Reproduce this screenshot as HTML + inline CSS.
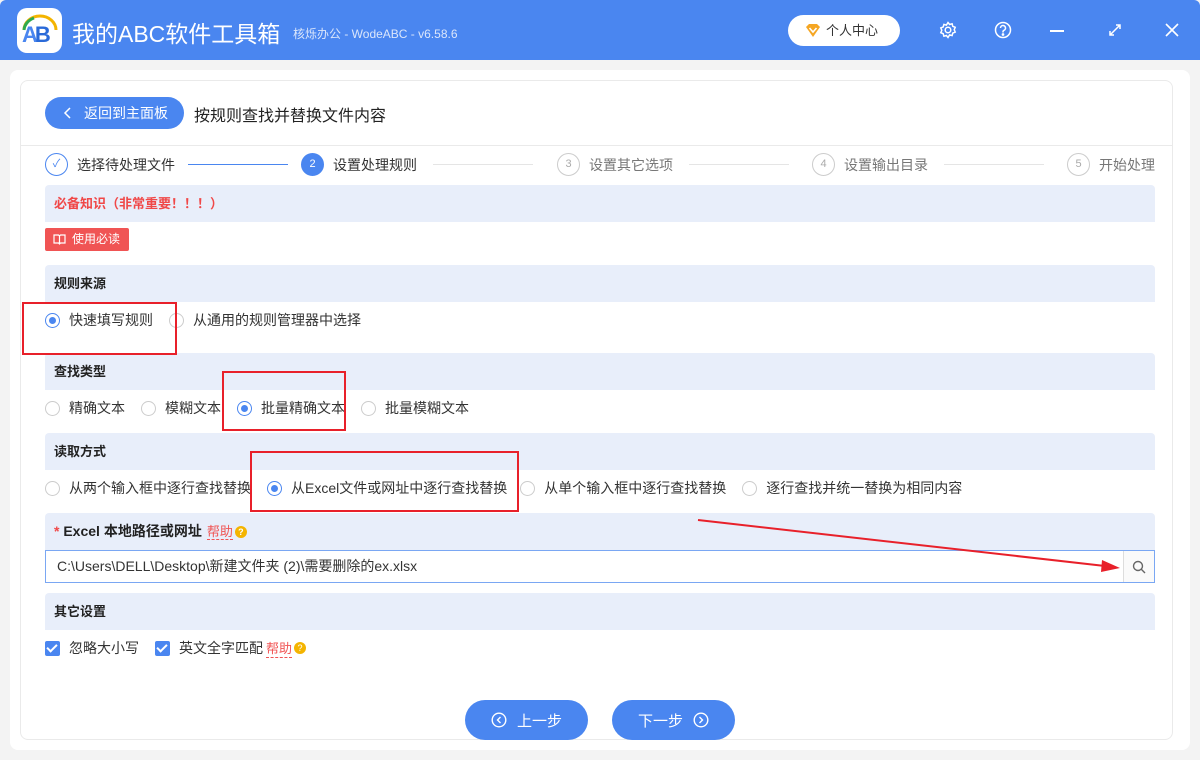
<!DOCTYPE html><html><head><meta charset="utf-8"><style>
*{box-sizing:border-box;margin:0;padding:0}
body{width:1200px;height:760px;position:relative;overflow:hidden;background:#f3f3f3;font-family:"Liberation Sans","Noto Sans CJK SC",sans-serif;font-size:13px;color:#333}
.a{position:absolute}
.top{left:0;top:0;width:1200px;height:60px;background:#4a86f0;border-radius:6px 6px 0 0}
.band{position:absolute;left:45px;width:1110px;height:37px;background:#e8eefa;border-radius:4px 4px 0 0;font-weight:bold;padding-left:9px;line-height:37px;font-size:13px;color:#222}
.row{position:absolute;left:45px;font-size:14px;display:flex;align-items:center;color:#333}
.r{width:15px;height:15px;border:1px solid #ccc;border-radius:50%;display:inline-block;margin-right:9px;position:relative;background:#fff}
.r.on{border-color:#4a86f0}.r.on:after{content:"";position:absolute;left:3px;top:3px;width:7px;height:7px;border-radius:50%;background:#4a86f0}
.it{display:flex;align-items:center;margin-right:16px}
.it.n{margin-right:13px}
.box{position:absolute;border:2px solid #e8202a}
.st{position:absolute;top:153px;display:flex;align-items:center;font-size:14px;color:#777}
.sc{width:23px;height:23px;border:1px solid #ccc;border-radius:50%;text-align:center;line-height:21px;font-size:11px;color:#aaa;margin-right:9px}
.cb{width:15px;height:15px;background:#4a86f0;border-radius:2px;display:inline-block;margin-right:9px;position:relative}
.cb:after{content:"";position:absolute;left:4px;top:1px;width:4px;height:8px;border:solid #fff;border-width:0 2px 2px 0;transform:rotate(45deg)}
.help{color:#f05454;border-bottom:1px dashed #f05454;font-weight:normal;margin-left:5px}
.q{display:inline-block;width:12px;height:12px;border-radius:50%;background:#f4b400;color:#fff;font-size:9px;line-height:12px;text-align:center;margin-left:2px;vertical-align:1px}
.btn{position:absolute;top:700px;width:123px;height:40px;border-radius:20px;background:#4a86f0;color:#fff;font-size:15px;display:flex;align-items:center;justify-content:center}
</style></head><body>
<div class="a top"></div>
<div class="a" style="left:17px;top:8px;width:45px;height:45px;background:#fff;border-radius:10px"></div>
<div class="a" style="left:22px;top:22px;font-size:22px;font-weight:bold;color:#4a86f0;letter-spacing:-3px">A<span style="color:#2a6ad8">B</span></div>
<svg class="a" style="left:20px;top:12px" width="40" height="20"><path d="M4 18 A16 14 0 0 1 36 18" fill="none" stroke="#f4b400" stroke-width="3"/><path d="M4 18 A16 14 0 0 1 14 6" fill="none" stroke="#2eaa4f" stroke-width="3"/></svg>
<div class="a" style="left:72px;top:15px;font-size:23px;color:#fff">我的ABC软件工具箱</div>
<div class="a" style="left:293px;top:25px;font-size:12px;color:#dbe6fb">核烁办公 - WodeABC - v6.58.6</div>
<div class="a" style="left:788px;top:15px;width:112px;height:31px;background:#fff;border-radius:16px;font-size:13px;color:#333;line-height:31px;padding-left:38px">个人中心</div>
<svg class="a" style="left:805px;top:23px" width="16" height="15"><path d="M1 4 L4 1 L12 1 L15 4 L8 14 Z" fill="#f5a623"/><path d="M4.5 5 L8 9 L11.5 5" fill="none" stroke="#fff" stroke-width="1.6"/></svg>
<svg class="a" style="left:939px;top:21px" width="18" height="18" fill="none" stroke="#fff" stroke-width="1.5"><circle cx="9" cy="9" r="2.8"/><path d="M9 1.5l1.6 2 2.5-.7.7 2.5 2.4 1-1 2.4 1 2.4-2.4 1-.7 2.5-2.5-.7L9 16.5l-1.6-2-2.5.7-.7-2.5-2.4-1 1-2.4-1-2.4 2.4-1 .7-2.5 2.5.7z"/></svg>
<svg class="a" style="left:994px;top:21px" width="18" height="18" fill="none" stroke="#fff" stroke-width="1.5"><circle cx="9" cy="9" r="7.5"/><path d="M6.5 7a2.5 2.5 0 1 1 3.5 2.3c-.7.3-1 .8-1 1.5v.7"/><circle cx="9" cy="13.5" r=".6" fill="#fff"/></svg>
<div class="a" style="left:1050px;top:30px;width:14px;height:2px;background:#fff"></div>
<svg class="a" style="left:1108px;top:23px" width="14" height="14" stroke="#fff" stroke-width="1.5"><path d="M2 12L12 2M8 2h4v4M2 8v4h4" fill="none"/></svg>
<svg class="a" style="left:1165px;top:23px" width="14" height="14" stroke="#fff" stroke-width="1.6"><path d="M1 1L13 13M13 1L1 13"/></svg>
<div class="a" style="left:10px;top:70px;width:1180px;height:680px;background:#fff;border-radius:8px"></div>
<div class="a" style="left:20px;top:80px;width:1153px;height:660px;border:1px solid #eaeaea;border-radius:8px"></div>
<div class="a" style="left:20px;top:145px;width:1153px;height:1px;background:#eaeaea"></div>
<div class="a" style="left:45px;top:97px;width:139px;height:32px;background:#4a86f0;border-radius:16px;color:#fff;font-size:14px;line-height:32px;padding-left:39px">返回到主面板</div>
<svg class="a" style="left:63px;top:107px" width="10" height="12" stroke="#fff" stroke-width="1.5" fill="none"><path d="M7 1L2 6L7 11"/></svg>
<div class="a" style="left:194px;top:102px;font-size:16px;color:#222">按规则查找并替换文件内容</div>
<div class="st" style="left:45px;color:#333"><div class="sc" style="border-color:#4a86f0;color:#4a86f0">✓</div>选择待处理文件</div>
<div class="a" style="left:188px;top:164px;width:100px;height:1px;background:#4a86f0"></div>
<div class="st" style="left:301px;color:#333"><div class="sc" style="background:#4a86f0;border-color:#4a86f0;color:#fff">2</div>设置处理规则</div>
<div class="a" style="left:433px;top:164px;width:100px;height:1px;background:#e5e5e5"></div>
<div class="st" style="left:557px"><div class="sc">3</div>设置其它选项</div>
<div class="a" style="left:689px;top:164px;width:100px;height:1px;background:#e5e5e5"></div>
<div class="st" style="left:812px"><div class="sc">4</div>设置输出目录</div>
<div class="a" style="left:944px;top:164px;width:100px;height:1px;background:#e5e5e5"></div>
<div class="st" style="left:1067px"><div class="sc">5</div>开始处理</div>
<div class="band" style="top:185px;color:#f04848">必备知识（非常重要！！！）</div>
<div class="a" style="left:45px;top:228px;width:84px;height:23px;background:#f05454;border-radius:2px;color:#fff;font-size:12px;line-height:23px;padding-left:27px">使用必读</div>
<svg class="a" style="left:53px;top:234px" width="13" height="11" stroke="#fff" fill="none" stroke-width="1.2"><path d="M1 1h4.5l1 1 1-1H12v8H7.5l-1 1-1-1H1z M6.5 2v7"/></svg>
<div class="band" style="top:265px">规则来源</div>
<div class="row" style="top:310px"><span class="it"><span class="r on"></span>快速填写规则</span><span class="it"><span class="r"></span>从通用的规则管理器中选择</span></div>
<div class="band" style="top:353px">查找类型</div>
<div class="row" style="top:398px"><span class="it"><span class="r"></span>精确文本</span><span class="it"><span class="r"></span>模糊文本</span><span class="it"><span class="r on"></span>批量精确文本</span><span class="it"><span class="r"></span>批量模糊文本</span></div>
<div class="band" style="top:433px">读取方式</div>
<div class="row" style="top:478px"><span class="it"><span class="r"></span>从两个输入框中逐行查找替换</span><span class="it n"><span class="r on"></span>从Excel文件或网址中逐行查找替换</span><span class="it"><span class="r"></span>从单个输入框中逐行查找替换</span><span class="it"><span class="r"></span>逐行查找并统一替换为相同内容</span></div>
<div class="band" style="top:513px;font-size:14px"><span style="color:#f04848">*</span> Excel 本地路径或网址<span class="help" style="font-size:13px">帮助</span><span class="q">?</span></div>
<div class="a" style="left:45px;top:550px;width:1110px;height:33px;border:1px solid #7aa7f3;background:#fff;font-size:14px;line-height:31px;padding-left:11px;color:#333">C:\Users\DELL\Desktop\新建文件夹 (2)\需要删除的ex.xlsx</div>
<div class="a" style="left:1123px;top:551px;width:31px;height:31px;border-left:1px solid #ddd;background:#fafafa"></div>
<svg class="a" style="left:1132px;top:560px" width="14" height="14" stroke="#666" fill="none" stroke-width="1.4"><circle cx="6" cy="6" r="4.5"/><path d="M9.3 9.3L13 13"/></svg>
<div class="band" style="top:593px">其它设置</div>
<div class="row" style="top:638px"><span class="cb"></span>忽略大小写<span class="cb" style="margin-left:16px"></span>英文全字匹配<span class="help" style="margin-left:3px;font-size:13px">帮助</span><span class="q">?</span></div>
<div class="btn" style="left:465px"><svg width="16" height="16" style="margin-right:10px" stroke="#fff" fill="none" stroke-width="1.4"><circle cx="8" cy="8" r="6.8"/><path d="M9.5 5L6.5 8L9.5 11"/></svg>上一步</div>
<div class="btn" style="left:612px">下一步<svg width="16" height="16" style="margin-left:10px" stroke="#fff" fill="none" stroke-width="1.4"><circle cx="8" cy="8" r="6.8"/><path d="M6.5 5L9.5 8L6.5 11"/></svg></div>
<div class="box" style="left:22px;top:302px;width:155px;height:53px"></div>
<div class="box" style="left:222px;top:371px;width:124px;height:60px"></div>
<div class="box" style="left:250px;top:451px;width:269px;height:61px"></div>
<svg class="a" style="left:0;top:0" width="1200" height="760"><path d="M698 520L1105 566" stroke="#e8202a" stroke-width="2"/><path d="M1120 568L1102 560L1101 572Z" fill="#e8202a"/></svg>
</body></html>
